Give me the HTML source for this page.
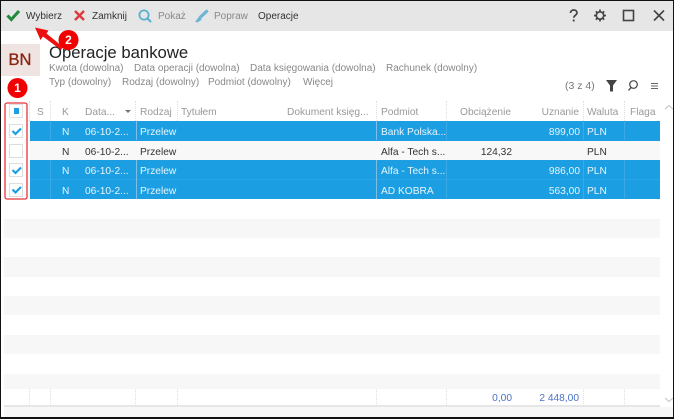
<!DOCTYPE html>
<html lang="pl"><head><meta charset="utf-8"><style>
html,body{margin:0;padding:0;width:674px;height:419px;overflow:hidden;background:#fff}
body{position:relative;font-family:"Liberation Sans",sans-serif;font-size:10px;color:#333}
#p{position:absolute;left:0;top:0;width:674px;height:419px;filter:blur(.3px)}
.a{position:absolute;white-space:nowrap}
.bar{position:absolute;left:0;width:674px}
.h{position:absolute;top:106px;color:#999;font-size:10.2px;line-height:13px;white-space:nowrap}
.c{position:absolute;font-size:10.2px;line-height:13px;white-space:nowrap}
.w{color:#e8f4fc}.d{color:#333}
.r{text-align:right}
.v{position:absolute;width:0;border-left:1px dotted #dedede}
.vb{position:absolute;width:1px;background:#7cc0ea}
.f{color:#888;font-size:10px;line-height:13px;position:absolute;white-space:nowrap}
.t{top:10px;font-size:10px;line-height:13px}
.cb{position:absolute;left:9px;width:14px;height:14px;background:#fff;border:1px solid #ddd;box-sizing:border-box}
</style></head><body><div id="p">
<div class="bar" style="top:0;height:31px;background:#e6e6e6"></div>
<div class="a t" style="left:26px;color:#333">Wybierz</div>
<div class="a t" style="left:92px;color:#333">Zamknij</div>
<div class="a t" style="left:158px;color:#888">Pokaż</div>
<div class="a t" style="left:214px;color:#888">Popraw</div>
<div class="a t" style="left:258px;color:#333">Operacje</div>
<svg class="a" style="left:0;top:0" width="674" height="31" viewBox="0 0 674 31">
<path d="M7.5 15.5l3.800 4 7.700-8.500" fill="none" stroke="#1f8a3a" stroke-width="3"/>
<path d="M75 11l9 9M84 11l-9 9" fill="none" stroke="#dd3a3a" stroke-width="2.400"/>
<circle cx="144" cy="15" r="4.600" fill="none" stroke="#5bb0d0" stroke-width="1.800"/><path d="M147.500 18.500l3.500 3.500" stroke="#5bb0d0" stroke-width="2.200"/>
<path d="M206.500 10l-7 6.500 1.500 1.500 7-6.500z" fill="#6cb4d4" stroke="#6cb4d4"/><path d="M199 17.500l2 2-3.500 2.500-1.500-.5z" fill="#6cb4d4" stroke="#6cb4d4"/>
<path d="M570.500 13c0-2 1.500-3 3.200-3s3.300 1 3.300 2.800c0 2.500-3.200 2.500-3.200 5" fill="none" stroke="#444" stroke-width="1.700"/><rect x="572.800" y="19.500" width="1.800" height="2" fill="#444"/>
<circle cx="600" cy="15.500" r="3.700" fill="none" stroke="#444" stroke-width="1.700"/>
<path d="M600 9.500v2.500M600 19v2.500M594 15.500h2.500M603.500 15.500h2.500M595.800 11.300l1.700 1.700M602.500 18l1.700 1.700M604.200 11.300l-1.700 1.700M597.500 18l-1.700 1.700" stroke="#444" stroke-width="1.700"/>
<rect x="623.500" y="10.500" width="10" height="10" fill="none" stroke="#444" stroke-width="1.600"/>
<path d="M654 10.500l10 10M664 10.500l-10 10" stroke="#444" stroke-width="1.600"/>
</svg>

<div class="a" style="left:0;top:44px;width:40px;height:32px;background:#efe4e1;color:#8a2412;font-size:16.500px;line-height:33px;text-align:center;-webkit-text-stroke:.3px #8a2412">BN</div>
<div class="a" style="left:49px;top:43px;font-size:16.700px;line-height:20px;color:#222">Operacje bankowe</div>
<div class="f" style="left:49px;top:62px">Kwota (dowolna)</div>
<div class="f" style="left:134px;top:62px">Data operacji (dowolna)</div>
<div class="f" style="left:250px;top:62px">Data księgowania (dowolna)</div>
<div class="f" style="left:386px;top:62px">Rachunek (dowolny)</div>
<div class="f" style="left:49px;top:76px">Typ (dowolny)</div>
<div class="f" style="left:122px;top:76px">Rodzaj (dowolny)</div>
<div class="f" style="left:208px;top:76px">Podmiot (dowolny)</div>
<div class="f" style="left:303px;top:76px">Więcej</div>
<div class="f" style="left:565px;top:80px;color:#777;font-size:10.500px">(3 z 4)</div>
<svg class="a" style="left:600px;top:76px" width="60" height="20" viewBox="600 76 60 20">
<path d="M606 80h11l-4 5.500v6l-3 0v-6z" fill="#444"/>
<circle cx="633.500" cy="84.500" r="3.800" fill="none" stroke="#444" stroke-width="1.200"/><path d="M631 87.500l-2.500 3" stroke="#444" stroke-width="1.300"/>
<path d="M651 83.500h7M651 86h7M651 88.500h7" stroke="#666" stroke-width="1"/>
</svg>

<div class="bar" style="left:30px;width:630px;top:101px;height:20px;background:#fff"></div>
<div class="bar" style="left:30px;width:630px;top:121px;height:19.500px;background:#1b9fe2"></div>
<div class="bar" style="left:30px;width:630px;top:140.500px;height:19.500px;background:#f8f8f8"></div>
<div class="bar" style="left:30px;width:630px;top:160px;height:19px;background:#1b9fe2"></div>
<div class="bar" style="left:30px;width:630px;top:179px;height:20px;background:#1b9fe2"></div>
<div class="bar" style="left:30px;width:630px;top:179px;height:1px;background:#2aa6e5"></div>

<div class="vb" style="left:50px;top:121px;height:19px;background:#3aaae6"></div>
<div class="vb" style="left:136px;top:121px;height:19px"></div>
<div class="vb" style="left:376px;top:121px;height:19px"></div>
<div class="vb" style="left:446px;top:121px;height:19px;background:#3aaae6"></div>
<div class="vb" style="left:583px;top:121px;height:19px;background:#3aaae6"></div>
<div class="vb" style="left:624px;top:121px;height:19px;background:#3aaae6"></div>
<div class="vb" style="left:50px;top:160px;height:39px;background:#3aaae6"></div>
<div class="vb" style="left:136px;top:160px;height:39px"></div>
<div class="vb" style="left:376px;top:160px;height:39px"></div>
<div class="vb" style="left:446px;top:160px;height:39px;background:#3aaae6"></div>
<div class="vb" style="left:583px;top:160px;height:39px;background:#3aaae6"></div>
<div class="vb" style="left:624px;top:160px;height:39px;background:#3aaae6"></div>

<div class="v" style="left:29px;top:101px;height:20px"></div>
<div class="v" style="left:50px;top:101px;height:20px"></div>
<div class="v" style="left:135px;top:101px;height:20px"></div>
<div class="v" style="left:177px;top:101px;height:20px"></div>
<div class="v" style="left:376px;top:101px;height:20px"></div>
<div class="v" style="left:446px;top:101px;height:20px"></div>
<div class="v" style="left:583px;top:101px;height:20px"></div>
<div class="v" style="left:624px;top:101px;height:20px"></div>

<div class="h" style="left:37px">S</div>
<div class="h" style="left:62px">K</div>
<div class="h" style="left:85px">Data...</div>
<div class="a" style="left:125px;top:110px;width:0;height:0;border-left:3.500px solid transparent;border-right:3.500px solid transparent;border-top:3.500px solid #777"></div>
<div class="h" style="left:140px">Rodzaj</div>
<div class="h" style="left:181px">Tytułem</div>
<div class="h" style="left:287px">Dokument księg...</div>
<div class="h" style="left:381px">Podmiot</div>
<div class="h r" style="left:440px;width:71px">Obciążenie</div>
<div class="h r" style="left:520px;width:59px">Uznanie</div>
<div class="h" style="left:587px">Waluta</div>
<div class="h" style="left:630px">Flaga</div>

<div class="c w" style="left:62px;top:126px">N</div><div class="c w" style="left:85px;top:126px">06-10-2...</div><div class="c w" style="left:140px;top:126px">Przelew</div><div class="c w" style="left:381px;top:126px">Bank Polska...</div><div class="c w r" style="left:520px;width:60px;top:126px">899,00</div><div class="c w" style="left:587px;top:126px">PLN</div>
<div class="c d" style="left:62px;top:146px">N</div><div class="c d" style="left:85px;top:146px">06-10-2...</div><div class="c d" style="left:140px;top:146px">Przelew</div><div class="c d" style="left:381px;top:146px">Alfa - Tech s...</div><div class="c d r" style="left:450px;width:62px;top:146px">124,32</div><div class="c d" style="left:587px;top:146px">PLN</div>
<div class="c w" style="left:62px;top:165px">N</div><div class="c w" style="left:85px;top:165px">06-10-2...</div><div class="c w" style="left:140px;top:165px">Przelew</div><div class="c w" style="left:381px;top:165px">Alfa - Tech s...</div><div class="c w r" style="left:520px;width:60px;top:165px">986,00</div><div class="c w" style="left:587px;top:165px">PLN</div>
<div class="c w" style="left:62px;top:185px">N</div><div class="c w" style="left:85px;top:185px">06-10-2...</div><div class="c w" style="left:140px;top:185px">Przelew</div><div class="c w" style="left:381px;top:185px">AD KOBRA</div><div class="c w r" style="left:520px;width:60px;top:185px">563,00</div><div class="c w" style="left:587px;top:185px">PLN</div>

<div class="cb" style="top:104px;border-color:#e2e2e2"></div>
<div class="a" style="left:14px;top:108px;width:5px;height:6px;background:#1b9fe2"></div>
<div class="cb" style="top:124px"></div><div class="cb" style="top:144px"></div><div class="cb" style="top:163px"></div><div class="cb" style="top:183px"></div>
<svg class="a" style="left:0;top:100px" width="30" height="100" viewBox="0 100 30 100">
<path d="M12.500 131l3 3 5.500-5.500M12.500 170l3 3 5.500-5.500M12.500 189.500l3 3 5.500-5.500" fill="none" stroke="#1b9fe2" stroke-width="2.200"/>
</svg>

<div class="bar" style="left:4px;width:656px;top:219px;height:19px;background:#f7f7f7"></div>
<div class="bar" style="left:4px;width:656px;top:257px;height:19.500px;background:#f7f7f7"></div>
<div class="bar" style="left:4px;width:656px;top:296px;height:19px;background:#f7f7f7"></div>
<div class="bar" style="left:4px;width:656px;top:335px;height:19px;background:#f7f7f7"></div>
<div class="bar" style="left:4px;width:656px;top:374px;height:15px;background:#f7f7f7"></div>
<div class="bar" style="left:4px;width:656px;top:405px;height:2px;background:#e6e6e6"></div>
<div class="bar" style="left:4px;width:669px;top:407px;height:10px;background:#f7f7f7"></div>
<div class="v" style="left:29px;top:389px;height:17px"></div>
<div class="v" style="left:50px;top:389px;height:17px"></div>
<div class="v" style="left:135px;top:389px;height:17px"></div>
<div class="v" style="left:177px;top:389px;height:17px"></div>
<div class="v" style="left:376px;top:389px;height:17px"></div>
<div class="v" style="left:446px;top:389px;height:17px"></div>
<div class="v" style="left:583px;top:389px;height:17px"></div>
<div class="v" style="left:624px;top:389px;height:17px"></div>
<div class="c r" style="left:450px;width:62px;top:392px;color:#4a72c8">0,00</div>
<div class="c r" style="left:520px;width:59px;top:392px;color:#4a72c8">2 448,00</div>
<svg class="a" style="left:660px;top:100px" width="13" height="310" viewBox="660 100 13 310">
<path d="M665 109l4-3.500 4 3.500M665 398l4 3.500 4-3.500" fill="none" stroke="#ccc" stroke-width="1.200"/>
</svg>

<svg class="a" style="left:0;top:0" width="100" height="210" viewBox="0 0 100 210">
<rect x="5" y="103" width="22" height="96" rx="2" fill="none" stroke="#e8333a" stroke-width="1.300"/>
<circle cx="17.500" cy="88" r="10" fill="#f00000"/>
<path d="M61 50L43 36.500l-2.500 3.500L35 27.500l13.500 3-2 3L63 47z" fill="#ec1010"/>
<circle cx="68.500" cy="40" r="10" fill="#f00000"/>
</svg>
<div class="a" style="left:7.500px;top:81px;width:20px;text-align:center;color:#fff;font-weight:bold;font-size:12px;line-height:14px">1</div>
<div class="a" style="left:58.500px;top:33px;width:20px;text-align:center;color:#fff;font-weight:bold;font-size:12px;line-height:14px">2</div>
</div>
<div class="a" style="left:0;top:0;width:674px;height:1px;background:#111"></div>
<div class="a" style="left:0;top:0;width:1px;height:419px;background:#111"></div>
<div class="a" style="left:673px;top:0;width:1px;height:419px;background:#111"></div>
<div class="a" style="left:0;top:417px;width:674px;height:2px;background:#111"></div>
</body></html>
